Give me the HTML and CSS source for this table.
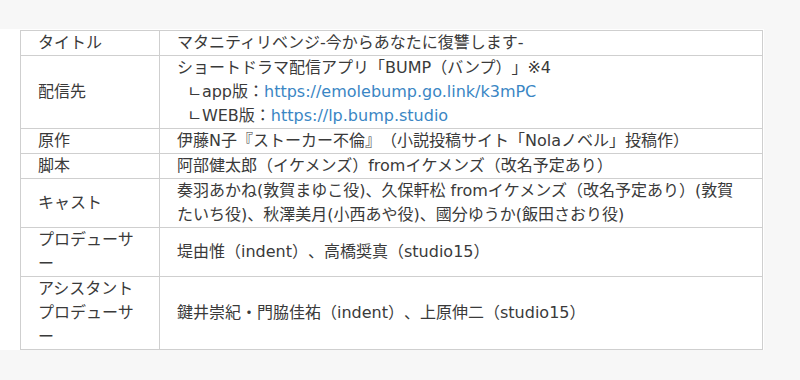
FILE: index.html
```html
<!DOCTYPE html>
<html lang="ja">
<head>
<meta charset="utf-8">
<link rel="stylesheet" href="styles.css">
</head>
<body>
<div class="sheet">
<table class="credits">
<tr><th>タイトル</th><td>マタニティリベンジ-今からあなたに復讐します-</td></tr>
<tr><th>配信先</th><td>ショートドラマ配信アプリ「BUMP（バンプ）」※4<br>&nbsp;&nbsp;ㄴapp版：<a href="#">https://emolebump.go.link/k3mPC</a><br>&nbsp;&nbsp;ㄴWEB版：<a href="#">https://lp.bump.studio</a></td></tr>
<tr><th>原作</th><td>伊藤N子『ストーカー不倫』（小説投稿サイト「Nolaノベル」投稿作）</td></tr>
<tr><th>脚本</th><td>阿部健太郎（イケメンズ）fromイケメンズ（改名予定あり）</td></tr>
<tr><th>キャスト</th><td>奏羽あかね(敦賀まゆこ役)、久保軒松 fromイケメンズ（改名予定あり）(敦賀たいち役)、秋澤美月(小西あや役)、國分ゆうか(飯田さおり役)</td></tr>
<tr><th>プロデューサー</th><td>堤由惟（indent）、高橋奨真（studio15）</td></tr>
<tr><th>アシスタントプロデューサー</th><td>鍵井崇紀・門脇佳祐（indent）、上原伸二（studio15）</td></tr>
</table>
</div>
</body>
</html>
```
FILE: styles.css
```css
html, body {
  margin: 0;
  padding: 0;
  background: #f7f7f7;
}
body {
  font-family: "DejaVu Sans", "Noto Sans CJK JP", sans-serif;
  font-size: 16px;
  line-height: 24px;
  color: #3a3a3a;
  text-spacing-trim: space-all;
}
.sheet {
  margin-top: 29px;
  width: 744px;
  padding: 1px 0 0 20px;
  background: #fff;
}
.credits {
  border-collapse: collapse;
  width: 743px;
  table-layout: fixed;
}
.credits th,
.credits td {
  border: 1px solid #cfcfcf;
  padding: 0 16px 0 17px;
  vertical-align: middle;
  text-align: left;
  font-weight: normal;
}
.credits th {
  width: 105px;
}
.credits a {
  color: #3a86c4;
  text-decoration: none;
}
```
